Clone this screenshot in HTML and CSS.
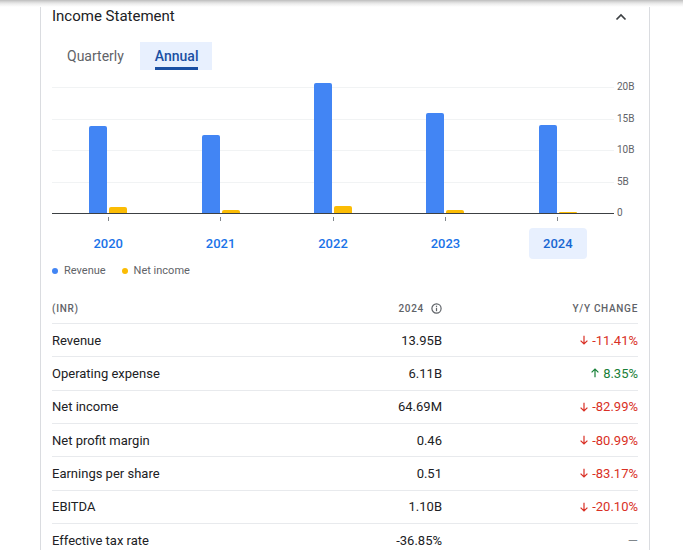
FILE: index.html
```html
<!DOCTYPE html>
<html>
<head>
<meta charset="utf-8">
<link rel="stylesheet" href="styles.css">
</head>
<body>
<div class="topshadow"></div>
<section class="card">
  <header class="card-head">
    <h2 class="title">Income Statement</h2>
    <svg class="chev" width="12" height="8" viewBox="0 0 12 8"><path d="M1.5 6.5 L6 2 L10.5 6.5" fill="none" stroke="#3c4043" stroke-width="1.7"/></svg>
  </header>
  <nav class="tabs">
    <div class="tab">Quarterly</div>
    <div class="tab active"><span class="tab-label">Annual</span></div>
  </nav>
  <div class="chart">
    <div class="plot-col">
      <div class="plot">
        <div class="grid">
          <div class="gl"></div><div class="gl"></div><div class="gl"></div><div class="gl"></div>
        </div>
        <div class="bars">
          <div class="group"><div class="bar rev" style="height:87px"></div><div class="bar ni" style="height:6px"></div></div>
          <div class="group"><div class="bar rev" style="height:78px"></div><div class="bar ni" style="height:3px"></div></div>
          <div class="group"><div class="bar rev" style="height:130px"></div><div class="bar ni" style="height:7px"></div></div>
          <div class="group"><div class="bar rev" style="height:100px"></div><div class="bar ni" style="height:3px"></div></div>
          <div class="group"><div class="bar rev" style="height:88px"></div><div class="bar ni" style="height:1.5px"></div></div>
        </div>
      </div>
      <div class="ticks">
        <div class="tk"><i></i></div><div class="tk"><i></i></div><div class="tk"><i></i></div><div class="tk"><i></i></div><div class="tk"><i></i></div>
      </div>
      <div class="years">
        <div class="yr"><span>2020</span></div>
        <div class="yr"><span>2021</span></div>
        <div class="yr"><span>2022</span></div>
        <div class="yr"><span>2023</span></div>
        <div class="yr"><span class="sel">2024</span></div>
      </div>
    </div>
    <div class="yaxis">
      <span>20B</span><span>15B</span><span>10B</span><span>5B</span><span>0</span>
    </div>
  </div>
  <div class="legend">
    <span class="lg"><i class="dot blue"></i>Revenue</span>
    <span class="lg"><i class="dot yellow"></i>Net income</span>
  </div>
  <div class="table">
    <div class="row head">
      <div class="c1">(INR)</div>
      <div class="c2">2024 <svg class="info" width="11" height="11" viewBox="0 0 11 11"><circle cx="5.5" cy="5.5" r="4.6" fill="none" stroke="#5f6368" stroke-width="1.2"/><rect x="4.9" y="4.8" width="1.2" height="3.4" fill="#5f6368"/><rect x="4.9" y="2.7" width="1.2" height="1.2" fill="#5f6368"/></svg></div>
      <div class="c3">Y/Y CHANGE</div>
    </div>
    <div class="row">
      <div class="c1">Revenue</div><div class="c2">13.95B</div>
      <div class="c3 down"><svg class="arr" width="10" height="10" viewBox="0 0 10 10"><path d="M5 0.8 V9 M1.6 5.6 L5 9 L8.4 5.6" fill="none" stroke="currentColor" stroke-width="1.2"/></svg>-11.41%</div>
    </div>
    <div class="row">
      <div class="c1">Operating expense</div><div class="c2">6.11B</div>
      <div class="c3 up"><svg class="arr" width="10" height="10" viewBox="0 0 10 10"><path d="M5 9.2 V1 M1.6 4.4 L5 1 L8.4 4.4" fill="none" stroke="currentColor" stroke-width="1.2"/></svg>8.35%</div>
    </div>
    <div class="row">
      <div class="c1">Net income</div><div class="c2">64.69M</div>
      <div class="c3 down"><svg class="arr" width="10" height="10" viewBox="0 0 10 10"><path d="M5 0.8 V9 M1.6 5.6 L5 9 L8.4 5.6" fill="none" stroke="currentColor" stroke-width="1.2"/></svg>-82.99%</div>
    </div>
    <div class="row">
      <div class="c1">Net profit margin</div><div class="c2">0.46</div>
      <div class="c3 down"><svg class="arr" width="10" height="10" viewBox="0 0 10 10"><path d="M5 0.8 V9 M1.6 5.6 L5 9 L8.4 5.6" fill="none" stroke="currentColor" stroke-width="1.2"/></svg>-80.99%</div>
    </div>
    <div class="row">
      <div class="c1">Earnings per share</div><div class="c2">0.51</div>
      <div class="c3 down"><svg class="arr" width="10" height="10" viewBox="0 0 10 10"><path d="M5 0.8 V9 M1.6 5.6 L5 9 L8.4 5.6" fill="none" stroke="currentColor" stroke-width="1.2"/></svg>-83.17%</div>
    </div>
    <div class="row">
      <div class="c1">EBITDA</div><div class="c2">1.10B</div>
      <div class="c3 down"><svg class="arr" width="10" height="10" viewBox="0 0 10 10"><path d="M5 0.8 V9 M1.6 5.6 L5 9 L8.4 5.6" fill="none" stroke="currentColor" stroke-width="1.2"/></svg>-20.10%</div>
    </div>
    <div class="row">
      <div class="c1">Effective tax rate</div><div class="c2">-36.85%</div>
      <div class="c3 flat">—</div>
    </div>
  </div>
</section>
</body>
</html>
```
FILE: styles.css
```css
* { box-sizing: border-box; }
html, body { margin: 0; padding: 0; background: #fff; }
body {
  font-family: Roboto, "Liberation Sans", sans-serif;
  color: #202124;
  overflow: hidden;
  height: 550px;
}
.topshadow {
  position: absolute;
  left: 0; top: 0; right: 0;
  height: 7px;
  background: linear-gradient(#bdbdbd 0px, #d9d9d9 2px, #eeeeee 4px, #ffffff 7px);
  z-index: 2;
}
.card {
  margin-left: 40px;
  width: 610px;
  border-left: 1px solid #dadce0;
  border-right: 1px solid #dadce0;
  padding: 0 11px;
  height: 560px;
}
.card-head {
  display: flex;
  align-items: center;
  justify-content: space-between;
  padding-top: 6px;
  height: 26px;
}
.title {
  margin: 0;
  font-size: 15px;
  line-height: 20px;
  font-weight: 400;
  color: #202124;
}
.chev { margin-right: 11px; margin-top: 2px; }
.tabs {
  display: flex;
  margin-top: 16px;
  padding-left: 1px;
}
.tab {
  height: 28px;
  padding: 0 14px;
  display: flex;
  align-items: center;
  font-size: 14px;
  font-weight: 400;
  color: #5f6368;
}
.tab:first-child { padding-right: 16px; }
.tab.active {
  background: #e8f0fe;
  color: #1a4fa3;
  font-weight: 500;
  align-items: stretch;
  padding: 0 14px 0 15px;
}
.tab-label {
  display: flex;
  align-items: center;
  border-bottom: 3px solid #1a4fa3;
  padding-top: 3px;
}
.chart {
  display: flex;
  margin-top: 11px;
}
.plot-col { width: 562px; padding-top: 6px; }
.plot {
  display: grid;
  grid-template-rows: 126px;
  height: 127px;
  border-bottom: 1px solid #3c4043;
}
.grid, .bars { grid-area: 1 / 1; }
.grid { display: flex; flex-direction: column; }
.gl { height: 31.5px; border-top: 1px solid #f1f3f4; }
.bars {
  display: flex;
  align-items: flex-end;
  height: 126px;
}
.group {
  flex: 1;
  display: flex;
  justify-content: center;
  align-items: flex-end;
  gap: 2px;
}
.bar { width: 18px; border-radius: 2px 2px 0 0; }
.bar.rev { background: #4285f4; }
.bar.ni { background: #fbbc04; }
.ticks { display: flex; height: 14px; }
.tk { flex: 1; display: flex; justify-content: center; padding-top: 3px; }
.tk i { display: block; width: 1px; height: 4px; background: #80868b; }
.years { display: flex; height: 31px; }
.yr { flex: 1; display: flex; justify-content: center; }
.yr span {
  display: flex;
  align-items: center;
  justify-content: center;
  width: 58px;
  height: 31px;
  font-size: 13px;
  font-weight: 500;
  color: #1a73e8;
  border-radius: 4px;
}
.yr span.sel { background: #e8f0fe; color: #1967d2; }
.yaxis {
  width: 24px;
  height: 138px;
  padding-left: 3px;
  display: flex;
  flex-direction: column;
  justify-content: space-between;
  font-size: 10px;
  line-height: 12px;
  color: #5f6368;
}
.legend {
  display: flex;
  gap: 16px;
  margin-top: 5px;
  font-size: 11px;
  line-height: 14px;
  color: #5f6368;
}
.lg { display: flex; align-items: center; }
.dot { display: block; width: 6px; height: 6px; border-radius: 50%; margin-right: 6px; }
.dot.blue { background: #4285f4; }
.dot.yellow { background: #fbbc04; }
.table { margin-top: 15px; }
.row {
  display: grid;
  grid-template-columns: 1fr 150px 196px;
  align-items: center;
  height: 33.33px;
  border-bottom: 1px solid #e8eaed;
  font-size: 13px;
  color: #202124;
}
.row.head {
  height: 31px;
  font-size: 10px;
  font-weight: 500;
  letter-spacing: 0.7px;
  color: #5f6368;
}
.c2, .c3 { text-align: right; display: flex; justify-content: flex-end; align-items: center; }
.info { margin-left: 7px; }
.c3.down { color: #d93025; }
.c3.up { color: #188038; }
.c3.flat { color: #80868b; }
.arr { margin-right: 3px; }
```
